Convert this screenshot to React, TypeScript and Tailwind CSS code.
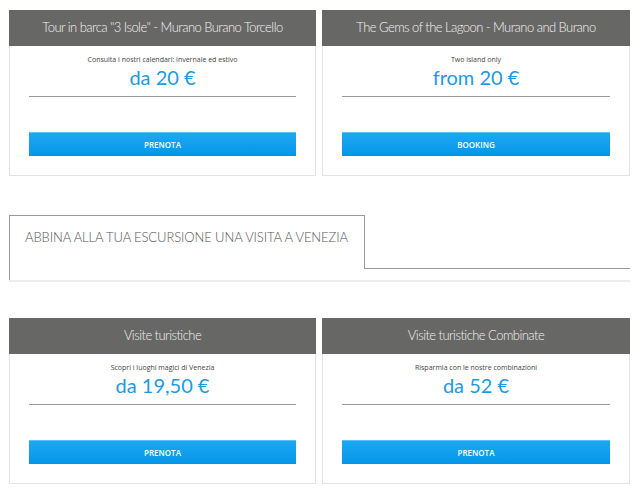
import React from "react";

type Card = { title: string; sub: string; price: string; btn: string };

const top: Card[] = [
  { title: 'Tour in barca "3 Isole" - Murano Burano Torcello', sub: "Consulta i nostri calendari: invernale ed estivo", price: "da 20 €", btn: "PRENOTA" },
  { title: "The Gems of the Lagoon - Murano and Burano", sub: "Two island only", price: "from 20 €", btn: "BOOKING" },
];
const bottom: Card[] = [
  { title: "Visite turistiche", sub: "Scopri i luoghi magici di Venezia", price: "da 19,50 €", btn: "PRENOTA" },
  { title: "Visite turistiche Combinate", sub: "Risparmia con le nostre combinazioni", price: "da 52 €", btn: "PRENOTA" },
];

function CardView({ c }: { c: Card }) {
  return (
    <div className="flex flex-col">
      <div className="h-[36px] bg-[#676765] flex items-center justify-center text-[#f2f2f2] text-[13px] tracking-[-0.55px] font-light" style={{ fontFamily: "Lato, 'Open Sans', sans-serif" }}>
        {c.title}
      </div>
      <div className="h-[130px] border-x border-b border-[#e3e3e3] px-[19px] flex flex-col">
        <div className="mt-[9px] text-center text-[7px] leading-[9px] text-[#444]" style={{ fontFamily: "'Open Sans', sans-serif" }}>{c.sub}</div>
        <div className="mt-[1px] text-center text-[20px] leading-[24px] text-[#1d9ae4]" style={{ fontFamily: "Lato, sans-serif" }}>{c.price}</div>
        <div className="mt-[7px] h-px bg-[#9a9a9a]" />
        <div className="mt-[35px] h-[24px] flex items-center justify-center text-white text-[8px] font-semibold border-t border-[#5cc0f5] bg-gradient-to-b from-[#1ca8f2] to-[#0495e8]" style={{ fontFamily: "'Open Sans', sans-serif" }}>
          {c.btn}
        </div>
      </div>
    </div>
  );
}

export default function App() {
  return (
    <div className="w-[639px] h-[500px] bg-white pt-[10px] pl-[9px] pr-[9px]">
      <div className="grid grid-cols-[307px_308px] gap-x-[6px]">
        {top.map((c, i) => <CardView key={i} c={c} />)}
      </div>
      <div className="mt-[39px] flex flex-col">
        <div className="border-l border-[#9a9a9a] h-[65px] flex flex-col">
          <div className="flex">
            <div className="w-[355px] h-[54px] border-t border-r border-[#9a9a9a] pl-[15px] pt-[12px] text-[13px] tracking-[-0.1px] text-[#555] font-light" style={{ fontFamily: "Lato, sans-serif" }}>
              ABBINA ALLA TUA ESCURSIONE UNA VISITA A VENEZIA
            </div>
            <div className="flex-1 h-[54px] border-b border-[#9a9a9a]" />
          </div>
        </div>
        <div className="h-[2px] bg-[#eeeeee]" />
      </div>
      <div className="mt-[36px] grid grid-cols-[307px_308px] gap-x-[6px]">
        {bottom.map((c, i) => <CardView key={i} c={c} />)}
      </div>
    </div>
  );
}
